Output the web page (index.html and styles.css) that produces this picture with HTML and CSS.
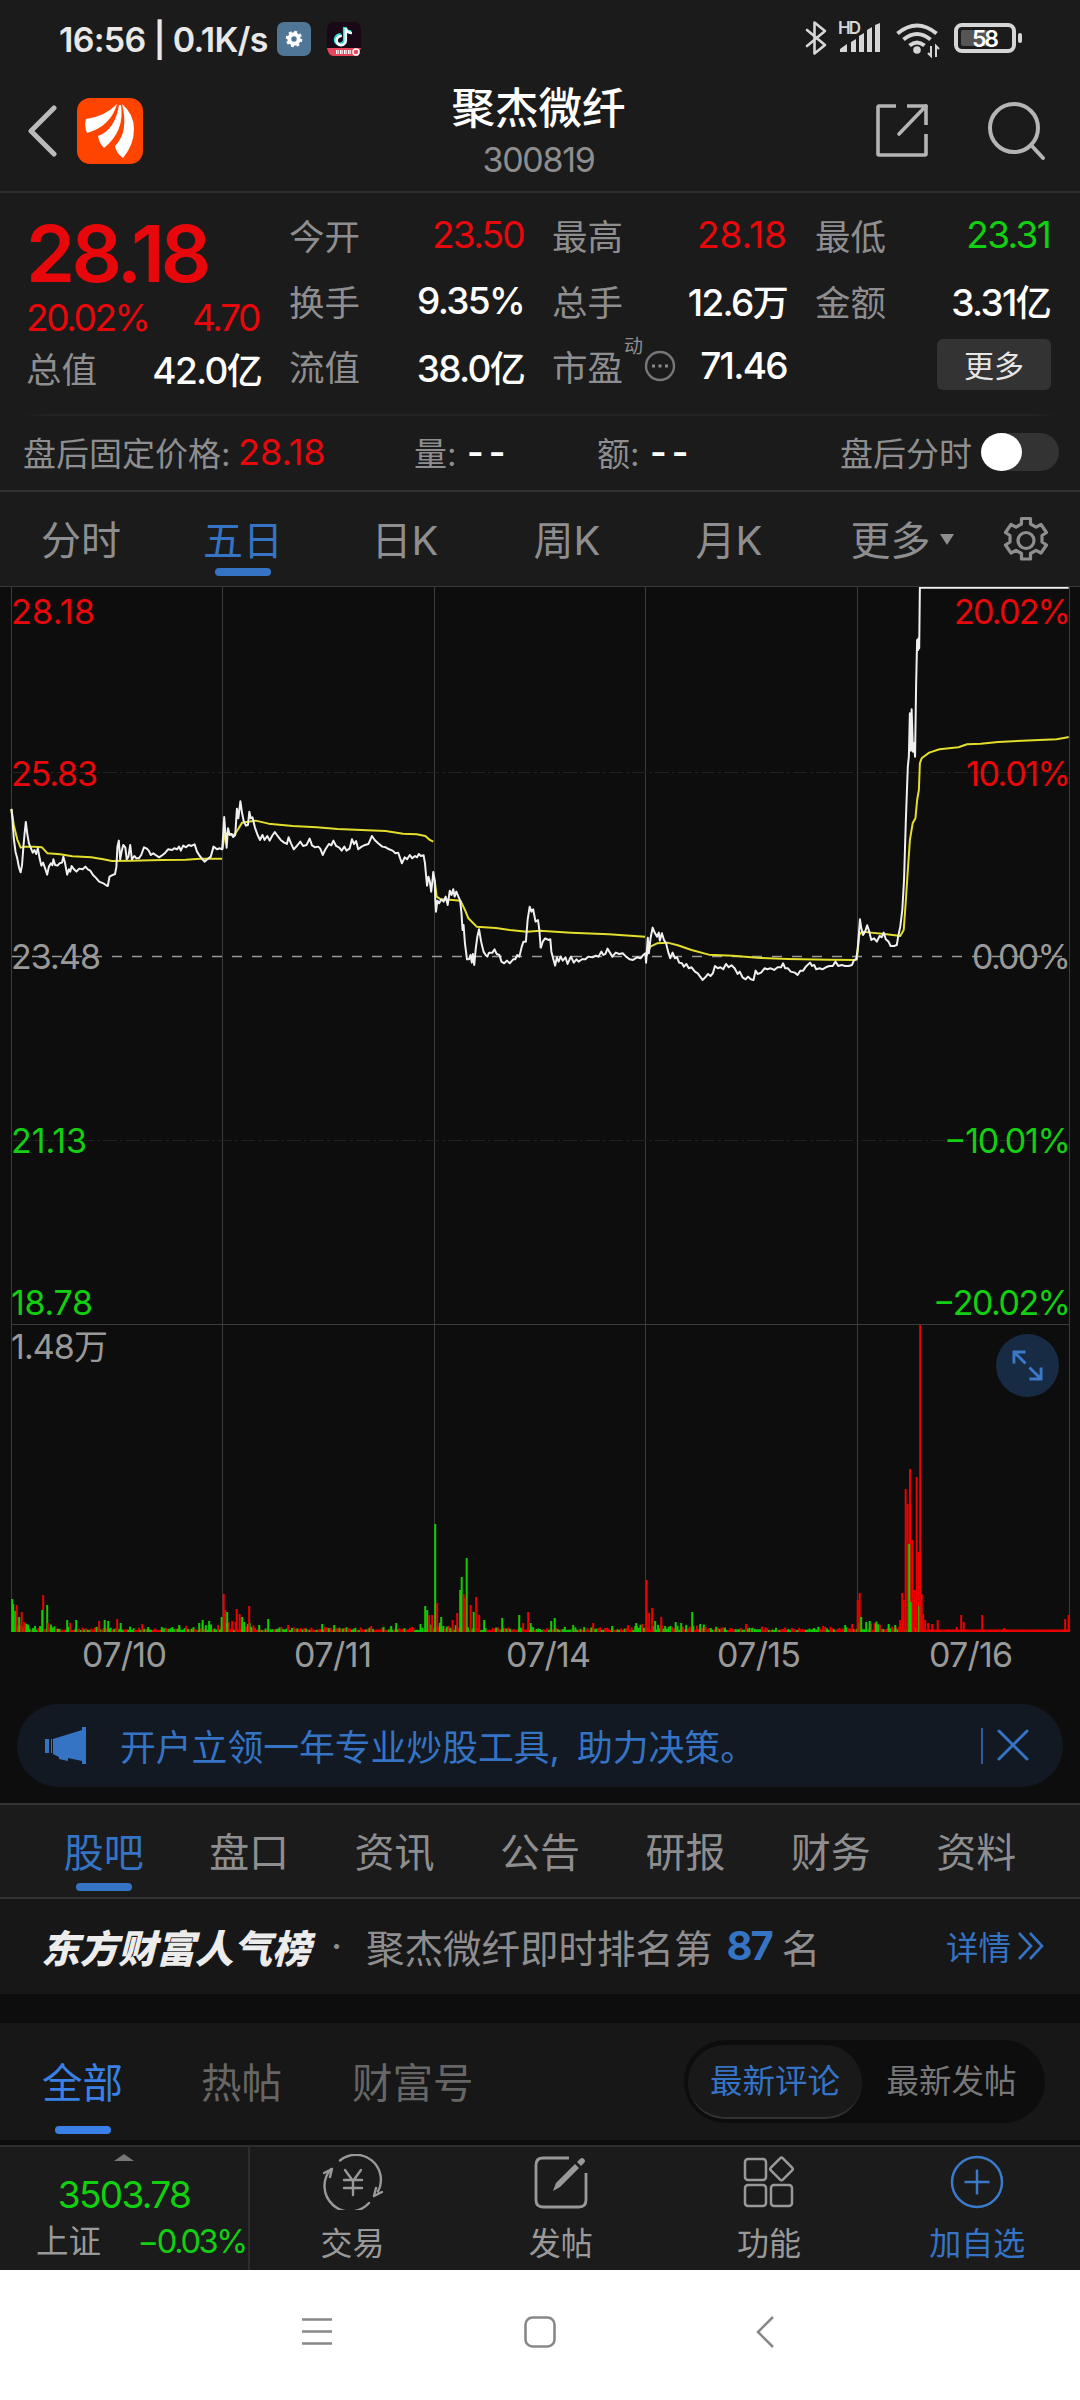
FILE: index.html
```html
<!DOCTYPE html>
<html lang="zh-CN">
  <head>
    <title>聚杰微纤 300819</title>
    <meta charset="UTF-8">
    <meta name="viewport" content="width=device-width, initial-scale=1.0">
    <link rel="stylesheet" href="styles.css">
  </head>
  <body>
    <!-- Status bar -->
    <div class="status-bar">
      <span class="clock">16:56 | 0.1K/s</span>
      <svg class="app-icon" viewBox="0 0 34 34">
        <rect width="34" height="34" rx="7" fill="#4f7694"/>
        <circle cx="17" cy="17" r="4.7" fill="none" stroke="#fff" stroke-width="4"/>
        <circle cx="17" cy="17" r="7" fill="none" stroke="#fff" stroke-width="2.6" stroke-dasharray="2.9 2.6"/>
      </svg>
      <svg class="app-icon second" viewBox="0 0 34 34">
        <rect width="34" height="34" rx="7" fill="#190815"/>
        <path d="M17.6 5v12.6a4.6 4.6 0 1 1-4-4.6M17.6 5c.4 3 3 5 6.500 5" fill="none" stroke="#27e0dc" stroke-width="3.4"/>
        <path d="M18.800 6v12.600a4.600 4.600 0 1 1-4-4.600M18.800 6c.4 3 3 5 6.200 5" fill="none" stroke="#fff" stroke-width="2.6"/>
        <path d="M0 26h34l-3 8H6q-5-1-6-8z" fill="#e8465c"/>
        <path d="M9 30h3m1 0h3m1 0h3m1 0h3" stroke="#fff" stroke-width="4" stroke-dasharray="1.500 .8"/>
        <circle cx="29" cy="30" r="3" fill="none" stroke="#fff" stroke-width="1.500"/>
      </svg>
      <svg class="signals" viewBox="800 18 230 44">
        <g fill="none" stroke="#d6d6d6" stroke-width="2.600" stroke-linejoin="round" stroke-linecap="round">
          <path d="M807 31l18 15-10.500 8.500v-31l10.500 8.500-18 15"/>
        </g>
        <text x="838" y="34.500" class="hd" textLength="23">HD</text>
        <g fill="#d6d6d6">
          <path d="M840 53v-3l7-5v8zM851 53v-10l5-3v13zM859 53v-16l5-3v19zM867 53v-22l5-3v25zM875 53v-27l5-2v29z"/>
          <circle cx="917" cy="51" r="3.800"/>
          <path d="M931 47v10l-3-3M936 58v-11l3 3" fill="none" stroke="#d6d6d6" stroke-width="2"/>
        </g>
        <g fill="none" stroke="#d6d6d6" stroke-width="4">
          <path d="M897.500 34.500q19.500-16 39 0M903.500 40.500q13.500-11 27 0M909.500 46.500q7.500-6 15 0"/>
        </g>
        <rect x="956" y="26" width="58" height="26" rx="6" fill="none" stroke="#d6d6d6" stroke-width="4"/>
        <rect x="961" y="31" width="27" height="16" rx="2" fill="#555"/>
        <rect x="1018" y="34" width="4" height="10" rx="2" fill="#d6d6d6"/>
        <text x="972" y="48" class="battery" textLength="27">58</text>
      </svg>
    </div>

    <!-- Title bar -->
    <header>
      <svg class="back" viewBox="0 0 30 52"><path d="M27 3L4 26l23 23" fill="none" stroke="#bbb" stroke-width="5" stroke-linecap="round" stroke-linejoin="round"/></svg>
      <svg class="logo" viewBox="0 0 66 66">
        <rect width="66" height="66" rx="13" fill="#ff4400"/>
        <path d="M9 21q18-2 31-15-6 22-30 29-3-7-1-14zM21 38q17-6 21-31h2q4 26-17 43-5-5-6-12zM38 48q14-14 7-42 12 10 12 25 0 16-11 29-7-5-8-12z" fill="#fff"/>
      </svg>
      <div class="stock">
        <h1>聚杰微纤</h1>
        <div class="code">300819</div>
      </div>
      <svg class="share" viewBox="0 0 54 56">
        <g fill="none" stroke="#b5b5b5" stroke-width="3.600" stroke-linejoin="round">
          <path d="M21 3H4q-1 0-1 1v47q0 1 1 1h46q1 0 1-1V31M32 3h19v19"/>
          <path d="M51 3L24 31" stroke-linecap="round"/>
        </g>
      </svg>
      <svg class="search" viewBox="0 0 60 62">
        <g fill="none" stroke="#b5b5b5" stroke-width="4"><circle cx="27" cy="28" r="24"/><path d="M44 45l12 13" stroke-linecap="round"/></g>
      </svg>
    </header>

    <!-- Quote -->
    <section class="quote">
      <div class="col">
        <div class="price up">28.18</div>
        <div class="change up"><span>20.02%</span><span>4.70</span></div>
        <div class="stat"><label>总值</label><b>42.0<i>亿</i></b></div>
      </div>
      <div class="col">
        <div class="stat"><label>今开</label><b class="up">23.50</b></div>
        <div class="stat"><label>换手</label><b>9.35%</b></div>
        <div class="stat"><label>流值</label><b>38.0<i>亿</i></b></div>
      </div>
      <div class="col">
        <div class="stat"><label>最高</label><b class="up wide">28.18</b></div>
        <div class="stat"><label>总手</label><b>12.6<i>万</i></b></div>
        <div class="stat">
          <label>市盈<sup>动</sup></label>
          <svg class="info" viewBox="0 0 32 32"><circle cx="16" cy="16" r="14" fill="none" stroke="#777" stroke-width="2.400"/><path d="M8 16h3m3.500 0h3m3.500 0h3" stroke="#888" stroke-width="3"/></svg>
          <b>71.46</b>
        </div>
      </div>
      <div class="col">
        <div class="stat"><label>最低</label><b class="down">23.31</b></div>
        <div class="stat"><label>金额</label><b>3.31<i>亿</i></b></div>
        <div class="stat"><button class="more">更多</button></div>
      </div>
    </section>
    <section class="after-hours">
      <span class="fixed">盘后固定价格:</span><b class="up wide">28.18</b>
      <span class="vol">量:</span><b class="none">--</b>
      <span class="amt">额:</span><b class="none">--</b>
      <span class="switch-label">盘后分时</span>
      <div class="switch"></div>
    </section>

    <!-- Chart period -->
    <nav class="periods">
      <a>分时</a>
      <a class="active">五日</a>
      <a>日K</a>
      <a>周K</a>
      <a>月K</a>
      <a class="more-periods">更多<span class="caret"></span></a>
      <svg class="gear" viewBox="0 0 48 50">
        <path d="M19.500 2.500h9v5.500l5.500 3.200 5-2.700 5.500 8-4.500 3v6.500l4.500 3-5.500 8-5-2.700-5.500 3.200v5.500h-9v-5.500l-5.500-3.200-5 2.700-5.500-8 4.500-3v-6.500l-4.500-3 5.500-8 5 2.700 5.500-3.200z" fill="none" stroke="#8e8e8e" stroke-width="3.200" stroke-linejoin="round"/>
        <circle cx="24" cy="24.500" r="8" fill="none" stroke="#8e8e8e" stroke-width="3.200"/>
      </svg>
    </nav>

    <!-- Five day chart -->
    <div class="chart">
      <svg id="chart" viewBox="0 587 1080 1097">
        <g class="grid">
          <path d="M11.500 587v1045M222.500 587v1045M434.500 587v1045M645.500 587v1045M857.500 587v1045M1069.500 587v1045M11 1324.500h1059"/>
          <path class="faint" d="M11 772.500h1058M11 1140.500h1058"/>
        </g>
        <path class="zero" d="M12 956.500h1057"/>
        <path class="base" d="M11 1631.500h1059"/>
        <g id="volume"></g>
        <g class="avg" transform="translate(0 580) scale(.3444 .3333)">
          <polyline points="33,687 40,735 50,778 60,803 75,800 100,800 122,802 138,820 175,823 210,829 265,832 300,838 325,843 380,842 470,840 540,839 580,836 645,836"/>
          <polyline points="646,808 652,765 660,760 680,765 690,750 703,728 720,725 742,722 780,731 850,738 920,742 980,747 1050,750 1120,753 1170,761 1210,763 1235,768 1248,780 1258,785"/>
          <polyline points="1262,900 1268,950 1280,958 1315,960 1337,962 1350,990 1360,1015 1384,1040 1440,1044 1480,1050 1530,1055 1568,1052 1658,1058 1768,1063 1873,1070"/>
          <polyline points="1876,1130 1888,1100 1908,1090 1938,1088 1968,1096 2008,1110 2058,1124 2128,1127 2208,1134 2288,1137 2408,1139 2485,1140"/>
          <polyline points="2485,1140 2488,1138 2495,1065 2503,1055 2528,1058 2568,1062 2598,1066 2614,1068 2624,1050 2629,980 2636,870 2642,780 2650,730 2658,715 2663,660 2668,630 2671,550 2676,535 2698,518 2728,508 2783,502 2808,493 2848,491 2898,486 2968,482 3068,478 3093,473 3103,471"/>
        </g>
        <g class="last">
          <polyline transform="translate(0 580) scale(.3444 .3333)" points="33,687 36,715 40,775 45,815 50,835 55,862 60,877 64,855 68,800 71,765 75,726 79,760 84,790 89,803 95,818 100,810 105,822 110,805 115,835 120,857 125,848 130,862 137,884 142,860 148,850 152,856 155,838 160,855 167,857 173,850 180,848 184,830 189,850 195,884 200,868 204,875 208,858 215,868 222,875 230,866 240,868 248,860 255,868 262,872 270,885 278,893 288,905 300,910 308,916 313,918 318,890 325,886 334,882 338,860 341,800 345,782 349,838 354,810 358,795 364,803 368,838 373,830 378,795 383,838 390,828 396,835 403,835 410,825 418,802 425,805 432,812 438,825 445,820 452,825 462,832 472,825 480,818 488,808 500,810 506,805 514,808 520,800 525,812 532,797 540,802 548,795 556,798 565,793 572,815 580,828 588,838 594,845 602,838 612,830 620,800 630,808 638,805 645,808 647,780 651,711 655,770 658,803 662,745 667,765 672,762 677,771 683,765 688,686 692,715 698,664 703,700 708,725 714,737 720,735 724,695 728,715 733,712 740,742 748,765 755,780 762,765 768,780 776,768 783,782 790,768 798,756 806,768 815,780 825,788 833,792 838,772 845,790 853,808 862,798 872,785 880,798 890,795 899,776 906,796 915,802 924,800 930,806 937,825 945,808 955,792 962,796 968,782 976,798 985,803 992,812 1000,800 1006,812 1015,806 1022,778 1028,792 1034,783 1040,808 1050,800 1060,795 1070,792 1080,768 1088,780 1098,790 1110,800 1120,802 1130,808 1140,812 1148,820 1156,818 1162,835 1167,850 1175,832 1182,838 1190,825 1197,835 1205,828 1211,832 1216,822 1222,828 1230,826 1234,850 1237,885 1240,917 1244,890 1248,905 1252,935 1256,900 1258,876 1262,900 1264,960 1266,995 1270,962 1275,970 1282,958 1288,965 1294,950 1300,975 1306,932 1311,945 1316,928 1320,950 1325,935 1331,950 1336,962 1340,1000 1343,1050 1346,1035 1350,1090 1356,1138 1362,1138 1366,1125 1370,1148 1373,1122 1377,1155 1381,1110 1386,1070 1391,1048 1397,1085 1404,1115 1410,1125 1415,1130 1420,1118 1430,1118 1436,1108 1442,1122 1450,1125 1456,1145 1464,1150 1472,1142 1480,1150 1490,1138 1496,1138 1502,1125 1508,1130 1515,1100 1520,1085 1527,1085 1532,1020 1538,980 1543,995 1548,988 1555,1025 1562,1020 1566,1050 1570,1105"/>
          <polyline transform="translate(540 580) scale(.3444 .3333)" points="2,1105 8,1085 15,1075 24,1080 30,1078 33,1115 38,1135 44,1157 49,1132 54,1145 60,1130 66,1142 74,1132 80,1152 86,1138 90,1130 98,1148 106,1138 112,1145 122,1138 132,1138 140,1130 152,1132 162,1127 170,1130 178,1115 184,1125 190,1122 196,1106 203,1118 210,1130 220,1118 230,1122 240,1120 250,1130 260,1138 270,1140 282,1132 292,1135 300,1125 306,1120 308,1148 313,1073 316,1120 321,1075 327,1043 334,1060 340,1070 345,1058 348,1082 354,1060 360,1080 366,1090 372,1115 378,1135 385,1118 392,1135 398,1132 404,1148 412,1150 418,1160 425,1152 432,1165 440,1162 450,1175 458,1180 465,1190 472,1200 480,1192 488,1182 495,1188 502,1180 508,1158 516,1165 524,1162 532,1168 540,1152 548,1162 556,1156 565,1165 574,1182 580,1175 588,1192 597,1198 604,1190 612,1198 620,1200 626,1172 632,1182 642,1178 652,1165 660,1168 670,1165 680,1170 690,1162 700,1162 706,1150 712,1165 720,1165 728,1175 740,1178 748,1185 756,1172 764,1172 772,1160 784,1148 790,1158 796,1155 802,1168 812,1165 820,1168 830,1162 840,1158 850,1158 858,1145 866,1158 876,1155 886,1158 896,1158 906,1155 912,1140 918,1138 922,1110 926,1060 929,1018 933,1045 938,1065 944,1055 950,1036 956,1055 962,1080 970,1075 978,1085 986,1068 992,1072 998,1058 1004,1078 1012,1085 1018,1098 1028,1098 1036,1095 1040,1070 1046,1040 1052,990 1057,900 1062,730 1068,560 1071,530 1074,400 1077,512 1079,388 1083,515 1086,490 1089,530 1092,320 1095,180 1098,210 1099,175 1101,205 1103,23 1535,23"/>
        </g>
        <g class="axis">
          <text class="up" x="11" y="623.500" textLength="84">28.18</text>
          <text class="up" x="11" y="785.500" textLength="87">25.83</text>
          <text x="11" y="969" textLength="90">23.48</text>
          <text class="down" x="11" y="1153" textLength="76">21.13</text>
          <text class="down" x="11" y="1315" textLength="82">18.78</text>
          <text x="11" y="1359" textLength="97">1.48万</text>
          <text class="up" x="954" y="623.500" textLength="117">20.02%</text>
          <text class="up" x="966" y="785.500" textLength="105">10.01%</text>
          <text x="972" y="969" textLength="99">0.00%</text>
          <text class="down" x="944" y="1153" textLength="127">−10.01%</text>
          <text class="down" x="933" y="1315" textLength="138">−20.02%</text>
          <text x="82" y="1667" textLength="85">07/10</text>
          <text x="294" y="1667" textLength="78">07/11</text>
          <text x="506" y="1667" textLength="85">07/14</text>
          <text x="717" y="1667" textLength="84">07/15</text>
          <text x="929" y="1667" textLength="84">07/16</text>
        </g>
      </svg>
      <div class="expand">
        <svg viewBox="0 0 32 32"><path d="M2 14V2h12M2 2l12 12M30 18v12H18M30 30L18 18" fill="none" stroke="#3b78c8" stroke-width="3"/></svg>
      </div>
    </div>
    <script>
      // Volume bars: x, height, colour
      const peaks = `
        12 33 g, 13 28 g, 15 21 g, 16.5 27 r, 19 15 g, 21.5 20 r, 24 10 r, 27 7 g, 33 4 g, 40 6 g, 43 37 r, 42 22 g, 47 27 g, 48 9 r,
        67 12 g, 70 9 r, 76 12 g, 99 11 r, 104.5 12 g, 108 11 g, 117 13 r, 120.500 9 g, 142 8 r, 148 5 g, 166 4 r, 179 7 g,
        186 6 r, 199 9 g, 202.500 12 g, 209 11 g, 221.500 15 g, 223.500 38 r, 225 22 r, 227 20 g, 232 8 r, 236.500 23 r, 239.500 18 r,
        242 15 g, 244 10 g, 249 26 r, 251 5 g, 259 7 g, 268 13 g, 288 7 r, 322 8 g, 325 5 r, 334 7 g, 371 6 r, 391 6 g, 396 9 g,
        412 5 r, 425 26 g, 427 22 g, 429 17 r, 432 17 r, 435 108 g, 437 29 r, 441 15 g, 452.500 12 r, 457 19 r, 460 42 g, 461.500 55 g,
        463.500 38 r, 466.500 74 g, 465 34 r, 470.500 27 r, 473.500 20 g, 476 35 r, 479 17 r, 484 12 g, 502 14 g, 519 17 g, 523 9 r,
        528 20 r, 530.500 9 g, 551 11 g, 554.500 14 g, 573 7 g, 593 9 r, 612 6 g, 628 7 r, 636 9 g, 646.500 52 r, 649 19 r, 652 24 r,
        655 11 g, 661 15 r, 665 6 g, 675.500 10 g, 681 9 g, 686 7 g, 692 20 g, 700 8 g, 746 8 r, 752 4 g, 799 4 r, 814 4 g, 823 6 r,
        845 7 g, 852 8 r, 857.500 32 r, 859.500 39 r, 861 15 g, 866 10 g, 869.500 11 g, 876 8 g, 888.500 8 g, 895 7 g, 900 12 r, 902 39 r,
        903.500 32 r, 905.500 143 r, 907.500 128 r, 909.800 163 r, 909 88 g, 912 92 r, 910.500 30 g, 914 42 r, 916.500 155 r, 918.500 80 r,
        919 26 g, 920 307 r, 921.500 38 r, 923 18 r, 925 12 r, 928 9 r, 932 8 r, 937.500 12 r, 956.500 5 r, 961 17 r, 963.500 10 r,
        982 17 r, 1004 4 r, 1065 13 r, 1068.500 17 r
      `.split(",").map(row => row.trim().split(" "));

      const volume = document.getElementById("volume");
      const drawBar = (x, height, colour) => {
        const bar = document.createElementNS("http://www.w3.org/2000/svg", "rect");
        bar.setAttribute("x", x - 0.8);
        bar.setAttribute("y", 1632 - height);
        bar.setAttribute("width", 2);
        bar.setAttribute("height", height);
        bar.setAttribute("class", colour === "r" ? "bar-up" : "bar-down");
        volume.appendChild(bar);
      };

      // Quiet minutes between the peaks:
      let seed = 7;
      const random = () => (seed = (seed * 16807) % 2147483647) / 2147483647;
      for (let x = 12; x < 1069; x += 1.76) {
        const limitUp = x > 921;
        const busy = (x < 60 || (x > 190 && x < 260) || (x > 420 && x < 480) || (x > 630 && x < 705) || (x > 845 && x < 900)) ? 10 : 4;
        const height = limitUp ? 2.5 : 2 + random() * random() * busy;
        drawBar(x, height, limitUp || random() < 0.5 ? "r" : "g");
      }
      for (const [x, height, colour] of peaks) drawBar(x, height, colour);
    </script>

    <!-- Promotion -->
    <div class="promo">
      <svg class="horn" viewBox="0 0 42 38"><path d="M0 12h4v14H0zM8 12L37 3V0h4v37h-4v-3l-14-3v3l-9-2v-2l-6-3zM6 12h1v14H6z" fill="#3573c4"/></svg>
      <span>开户立领一年专业炒股工具, 助力决策。</span>
      <svg class="close" viewBox="0 0 48 38"><path d="M1 1v36" stroke="#3573c4" stroke-width="1.500"/><path d="M18 4l28 28M46 4L18 32" stroke="#3573c4" stroke-width="3" stroke-linecap="round"/></svg>
    </div>

    <nav class="sections">
      <a class="active">股吧</a>
      <a>盘口</a>
      <a>资讯</a>
      <a>公告</a>
      <a>研报</a>
      <a>财务</a>
      <a>资料</a>
    </nav>

    <div class="rank">
      <span class="rank-title">东方财富人气榜</span>
      <span class="dot">·</span>
      <span class="rank-text">聚杰微纤即时排名第</span>
      <b>87</b>
      <span class="rank-text">名</span>
      <a>详情</a>
      <svg class="chevrons" viewBox="0 0 28 30"><path d="M2 2l12 13L2 28M13 2l12 13-12 13" fill="none" stroke="#3573c4" stroke-width="2.600"/></svg>
    </div>

    <div class="feed">
      <a class="active">全部</a>
      <a>热帖</a>
      <a>财富号</a>
      <div class="sort"><span class="on">最新评论</span><span>最新发帖</span></div>
    </div>

    <footer>
      <div class="index">
        <span class="index-arrow"></span>
        <div class="index-value">3503.78</div>
        <div class="index-row"><span>上证</span><b>−0.03%</b></div>
      </div>
      <div class="action">
        <svg viewBox="0 0 60 56">
          <g fill="none" stroke="#999" stroke-width="2.400" stroke-linecap="round" stroke-linejoin="round">
            <path d="M17 6.500a25 25 0 0 1 38 31M51 42l8-4M51 42l2-8M46 49A25 25 0 0 1 8 15M1 19l8-4M9 15l-2 8"/>
            <path d="M22 16l8 11 8-11M21 26h18M21 34h18M30 27v14"/>
          </g>
        </svg>
        <span>交易</span>
      </div>
      <div class="action">
        <svg viewBox="0 0 60 56">
          <path d="M38 4H12q-7 0-7 7v35q0 7 7 7h36q7 0 7-7V19" fill="none" stroke="#999" stroke-width="2.800"/>
          <path d="M22 37l3-8L44 10l4 4-19 19zM46 8l3-3q2-2 4 0t0 4l-3 3z" fill="#999"/>
        </svg>
        <span>发帖</span>
      </div>
      <div class="action">
        <svg viewBox="0 0 60 56">
          <g fill="none" stroke="#999" stroke-width="2.500">
            <rect x="6" y="5" width="21" height="21" rx="3"/>
            <rect x="6" y="31" width="21" height="21" rx="3"/>
            <rect x="32" y="31" width="21" height="21" rx="3"/>
            <rect x="34" y="6.500" width="17" height="17" rx="2" transform="rotate(45 42.500 15)"/>
          </g>
        </svg>
        <span>功能</span>
      </div>
      <div class="action add">
        <svg viewBox="0 0 60 56"><g fill="none" stroke="#3b7ac8" stroke-width="2.500"><circle cx="30" cy="28" r="25"/><path d="M17.500 28h25M30 15.500v25"/></g></svg>
        <span>加自选</span>
      </div>
    </footer>

    <!-- System navigation -->
    <div class="system-nav">
      <svg viewBox="0 0 32 32"><path d="M1 3.500h30M1 15.500h30M1 27.500h30" stroke="#888" stroke-width="2.600"/></svg>
      <svg viewBox="0 0 32 32"><rect x="1.500" y="1.500" width="29" height="29" rx="7" fill="none" stroke="#888" stroke-width="2.600"/></svg>
      <svg viewBox="0 0 32 32"><path d="M26 1L11 16l15 15" fill="none" stroke="#888" stroke-width="2.600"/></svg>
    </div>
  </body>
</html>
```
FILE: styles.css
```css
* {
  box-sizing: border-box;
}
html, body {
  margin: 0;
}
body {
  width: 1080px;
  height: 2400px;
  overflow: hidden;
  background-color: #0d0d0d;
  color: #8e8e90;
  font-family: Inter, 'Noto Sans CJK SC', sans-serif;
  white-space: nowrap;
}
svg {
  display: block;
  flex-shrink: 0;
}
b, i {
  font-style: normal;
  font-weight: 400;
}
.up {
  color: #e8080c;
  fill: #e8080c;
}
.down {
  color: #12cf12;
  fill: #12cf12;
}

/* Status bar */
.status-bar {
  display: flex;
  align-items: center;
  height: 80px;
  padding: 0 50px 2px 59px;
  background-color: #1b1b1b;
}
.clock {
  width: 218px;
  color: #e8e8e8;
  font-size: 34px;
  font-weight: 600;
  letter-spacing: -0.700px;
}
.app-icon {
  width: 34px;
  height: 34px;
}
.app-icon.second {
  margin-left: 16px;
}
.signals {
  width: 230px;
  height: 44px;
  margin-left: auto;
}
.hd {
  font-size: 17px;
  font-weight: 600;
  fill: #d6d6d6;
}
.battery {
  font-size: 23px;
  font-weight: 600;
  fill: #fff;
}

/* Title bar */
header {
  display: flex;
  align-items: center;
  height: 113px;
  padding: 0 33px 10px 27px;
  border-bottom: 2px solid #2c2c2c;
  background-color: #1b1b1b;
}
.back {
  width: 30px;
  height: 52px;
}
.logo {
  width: 66px;
  height: 66px;
  margin-left: 20px;
}
.stock {
  flex-grow: 1;
  padding: 3px 0 0 59px;
  text-align: center;
}
h1 {
  margin: 0;
  color: #fff;
  font-size: 43.500px;
  font-weight: 500;
  line-height: 54px;
}
.code {
  font-size: 34px;
  line-height: 49px;
  letter-spacing: -1.300px;
}
.share {
  width: 54px;
  height: 56px;
}
.search {
  width: 60px;
  height: 62px;
  margin-left: 58px;
}

/* Quote */
.quote {
  display: grid;
  grid-template-columns: repeat(4, 1fr);
  column-gap: 27px;
  height: 221px;
  margin: 0;
  padding: 9px 29px 0 26px;
  background-color: #1b1b1b;
}
.price {
  height: 99px;
  font-size: 79px;
  font-weight: 600;
  line-height: 102px;
  letter-spacing: -3.700px;
}
.change {
  display: flex;
  justify-content: space-between;
  height: 34px;
  padding-right: 3px;
  font-size: 37px;
  line-height: 34px;
  letter-spacing: -2.400px;
}
.stat {
  display: flex;
  align-items: center;
  justify-content: space-between;
  height: 65.500px;
  font-size: 36px;
}
.stat label {
  position: relative;
  font-size: 35.500px;
}
.stat b {
  padding-right: 1px;
  font-size: 37px;
  font-weight: 500;
  letter-spacing: -1.700px;
}
.stat b:not(.up):not(.down) {
  color: #fff;
}
.stat b.up, .stat b.down {
  font-weight: 400;
}
.stat b.wide, .after-hours b.wide {
  letter-spacing: 0;
}
.stat i {
  font-size: 36px;
  font-weight: 500;
}
.stat sup {
  position: absolute;
  top: -3px;
  left: 72px;
  font-size: 19px;
  line-height: 20px;
}
.info {
  width: 32px;
  height: 32px;
  margin-right: 4px;
}
.more {
  width: 114px;
  height: 51px;
  margin: -3px 0 0 auto;
  padding: 0;
  border: 0;
  border-radius: 6px;
  background-color: #333;
  color: #e6e6e6;
  font: 30px 'Noto Sans CJK SC', sans-serif;
}
.after-hours {
  display: flex;
  align-items: center;
  height: 78px;
  padding: 0 21px 0 23px;
  border-bottom: 2px solid #333;
  background: linear-gradient(90deg, transparent 2%, #242424 5%, #242424 95%, transparent 98%) top / 100% 2px no-repeat #1b1b1b;
  font-size: 33px;
}
.after-hours b {
  width: 100px;
  margin-left: 11px;
  font-size: 36px;
}
.fixed {
  width: 204px;
}
.after-hours .vol {
  margin-left: 76px;
}
.vol, .amt {
  width: 42px;
}
.after-hours .amt {
  margin-left: 30px;
}
.after-hours .none {
  color: #fff;
  font-weight: 600;
  letter-spacing: 5px;
}
.switch-label {
  margin-left: auto;
}
.switch {
  width: 78px;
  height: 38px;
  margin-left: 9px;
  border-radius: 19px;
  background-color: #333;
}
.switch::before {
  content: "";
  display: block;
  width: 41px;
  height: 38px;
  border-radius: 50%;
  background-color: #fff;
}

/* Tabs */
.periods, .sections {
  display: flex;
  align-items: center;
  height: 96px;
  background-color: #1b1b1b;
  font-size: 40px;
}
.periods {
  height: 95px;
  border-bottom: 1px solid #383838;
}
.periods a {
  width: 162px;
}
.periods a, .sections a {
  position: relative;
  margin-top: -2px;
  text-align: center;
}
.periods .active, .sections .active {
  color: #3573c4;
}
.periods .active::after, .sections .active::after, .feed .active::after {
  content: "";
  position: absolute;
  bottom: -9px;
  left: 50%;
  width: 56px;
  height: 8px;
  margin-left: -28px;
  border-radius: 4px;
  background-color: #3573c4;
}
.periods .more-periods {
  padding-left: 22px;
}
.caret {
  display: inline-block;
  margin: 0 0 10px 9px;
  border: 7px solid transparent;
  border-top: 11px solid #8e8e8e;
  border-bottom: 0;
}
.gear {
  width: 48px;
  height: 50px;
  margin: 3px 0 0 30px;
}
.sections {
  padding: 0 31px;
  border-top: 2px solid #333;
  border-bottom: 2px solid #333;
}
.sections a {
  flex: 1;
}
.sections .active::after {
  bottom: -12px;
}

/* Chart */
.chart {
  position: relative;
  height: 1097px;
}
#chart {
  width: 1080px;
  height: 1097px;
}
.grid path {
  fill: none;
  stroke: #3c3c3c;
}
.grid .faint {
  stroke: #222;
  stroke-dasharray: 14 3 3 3;
}
.zero {
  stroke: #999;
  stroke-width: 1.500px;
  stroke-dasharray: 10 10;
}
.base {
  stroke: #555;
}
.avg, .last {
  fill: none;
  stroke: #e3dd2c;
  stroke-width: 2px;
  stroke-linejoin: round;
}
.last {
  stroke: #f0f0f0;
}
polyline {
  vector-effect: non-scaling-stroke;
}
.axis {
  font-size: 34px;
}
.axis text:not(.up):not(.down) {
  fill: #999;
}
.bar-up {
  fill: #ee0000;
}
.bar-down {
  fill: #10cc00;
}
.expand {
  position: absolute;
  top: 747px;
  left: 996px;
  display: grid;
  place-items: center;
  width: 63px;
  height: 63px;
  border-radius: 50%;
  background-color: #182b44;
}
.expand svg {
  width: 31px;
  height: 31px;
}

/* Promotion */
.promo {
  display: flex;
  align-items: center;
  height: 83px;
  margin: 20px 17px 16px;
  padding: 0 34px 0 28px;
  border-radius: 42px;
  background-color: #121922;
  color: #3573c4;
  font-size: 35.800px;
  word-spacing: 7px;
}
.promo span {
  margin: -2px 0 0 33px;
}
.horn {
  width: 42px;
  height: 38px;
}
.close {
  width: 48px;
  height: 38px;
  margin-left: auto;
}

/* Popularity rank */
.rank {
  display: flex;
  align-items: center;
  height: 95px;
  padding: 0 35px 2px 41px;
  background-color: #171717;
  font-size: 38.500px;
}
.rank-title {
  width: 290px;
  color: #ececec;
  font-style: italic;
  font-weight: 900;
}
.dot {
  width: 35px;
}
.rank b {
  margin: 0 10px 0 14px;
  color: #3573c4;
  font-size: 40px;
  font-weight: 700;
  letter-spacing: -2px;
}
.rank a {
  margin-left: auto;
  color: #3573c4;
  font-size: 32.500px;
}
.chevrons {
  width: 28px;
  height: 30px;
  margin-left: 6px;
}

/* Posts */
.feed {
  display: flex;
  align-items: center;
  height: 117px;
  margin-top: 29px;
  padding: 0 35px 0 42px;
  background-color: #171717;
  color: #666;
  font-size: 40.500px;
}
.feed a {
  position: relative;
  margin: -2px 78px 0 0;
}
.feed a + a {
  margin-right: 70px;
}
.feed .active {
  color: #3a80e6;
}
.feed .active::after {
  bottom: -24px;
  background-color: #3a80e6;
}
.sort {
  display: flex;
  align-items: center;
  width: 361px;
  height: 83px;
  margin-left: auto;
  padding: 4px;
  border-radius: 42px;
  background-color: #0d0d0d;
  font-size: 32.500px;
}
.sort span {
  flex: 1;
  color: #777;
  line-height: 74px;
  text-align: center;
}
.sort .on {
  flex: 0 0 174px;
  height: 74px;
  border-bottom: 2px solid #333;
  border-radius: 37px;
  background-color: #191919;
  color: #3573c4;
}

/* Bottom bar */
footer {
  display: flex;
  height: 125px;
  margin-top: 5px;
  border-top: 2px solid #2d2d2d;
  background-color: #1b1b1b;
}
.index {
  position: relative;
  width: 250px;
  padding-top: 22px;
  border-right: 2px solid #2d2d2d;
  text-align: center;
}
.index-arrow {
  position: absolute;
  top: 7px;
  left: 114px;
  border: 10px solid transparent;
  border-top: 0;
  border-bottom: 7px solid #777;
}
.index-value {
  color: #12cf12;
  font-size: 37px;
  line-height: 51px;
  letter-spacing: -1.700px;
}
.index-row {
  display: flex;
  justify-content: space-between;
  padding: 0 2px 0 36px;
  font-size: 32.500px;
  line-height: 43px;
}
.index-row span {
  color: #999;
}
.index-row b {
  color: #12cf12;
  letter-spacing: -2.300px;
}
.action {
  flex: 1;
  color: #999;
  font-size: 32px;
  line-height: 48px;
  text-align: center;
}
.action:not(.add) {
  padding-right: 3px;
}
.action svg {
  width: 60px;
  height: 56px;
  margin: 7px auto 10px;
}
.add {
  color: #3573c4;
}

.system-nav {
  display: flex;
  justify-content: center;
  gap: 191px;
  height: 130px;
  padding-top: 46px;
  background-color: #fff;
}
.system-nav svg {
  width: 32px;
  height: 32px;
}
```
